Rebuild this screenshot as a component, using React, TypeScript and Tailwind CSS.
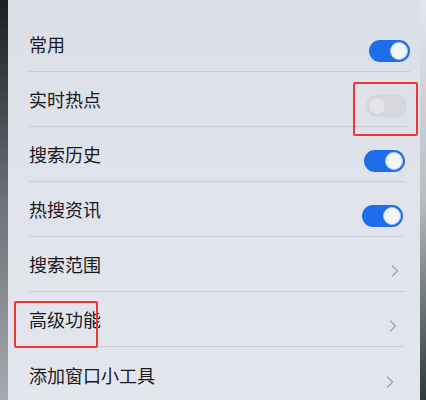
import React from 'react';
import { ChevronRight } from 'lucide-react';

type Row = {
  label: string;
  kind: 'on' | 'off' | 'link';
  // the photo is slightly skewed, so the right side drifts left going down
  edge: string;
};

const rows: Row[] = [
  { label: '常用', kind: 'on', edge: 'mr-[10px]' },
  { label: '实时热点', kind: 'off', edge: 'mr-[13px]' },
  { label: '搜索历史', kind: 'on', edge: 'mr-[15px]' },
  { label: '热搜资讯', kind: 'on', edge: 'mr-[17px]' },
  { label: '搜索范围', kind: 'link', edge: 'mr-[15px]' },
  { label: '高级功能', kind: 'link', edge: 'mr-[17px]' },
  { label: '添加窗口小工具', kind: 'link', edge: 'mr-[20px]' },
];

const Toggle = ({ on }: { on: boolean }) =>
  on ? (
    <div className="flex h-[22px] w-[41px] items-center justify-end rounded-full bg-[#1d6ee8] px-[2px]">
      <div className="h-[18px] w-[18px] rounded-full border border-[#b9c6e6] bg-[#f4f5f8]" />
    </div>
  ) : (
    <div className="flex h-[22px] w-[41px] items-center justify-start rounded-full bg-[#d5d7dc] px-[2px]">
      <div className="h-[18px] w-[18px] rounded-full border border-[#d0d2d8] bg-[#e2e4e8]" />
    </div>
  );

export default function App() {
  return (
    <div
      className="relative flex h-[400px] w-[426px] overflow-hidden bg-[#dfe2ea]"
      style={{ fontFamily: '"Noto Sans CJK SC", "Noto Sans", sans-serif' }}
    >
      <div className="w-[8px] shrink-0 bg-gradient-to-b from-[#1c1f21] via-[#6d7176] to-[#a6aab0]" />

      <div className="flex-1 bg-gradient-to-b from-[#dcdfe8] via-[#e1e3ec] to-[#e4e6ee] pt-[17px]">
        {rows.map((row, i) => (
          <div
            key={row.label}
            className={`ml-[21px] flex h-[55px] items-center justify-between ${
              i < rows.length - 1 ? 'border-b border-[#c9ccd6]' : ''
            } ${row.edge}`}
          >
            <span className="text-[18px] leading-none text-[#17181b]">{row.label}</span>
            <div className="mt-[14px]">
              {row.kind === 'link' ? (
                <ChevronRight size={20} strokeWidth={1.5} className="text-[#a2a5ad]" />
              ) : (
                <Toggle on={row.kind === 'on'} />
              )}
            </div>
          </div>
        ))}
      </div>

      <div className="w-[6px] shrink-0 bg-gradient-to-b from-[#e4e6ee] via-[#b9bdc2] to-[#2d3a3a]" />

      <div className="pointer-events-none absolute left-[353px] top-[82px] h-[54px] w-[65px] rounded-[2px] border-2 border-[#e8383a]" />
      <div className="pointer-events-none absolute left-[14px] top-[301px] h-[47px] w-[84px] rounded-[2px] border-2 border-[#e8383a]" />
    </div>
  );
}
